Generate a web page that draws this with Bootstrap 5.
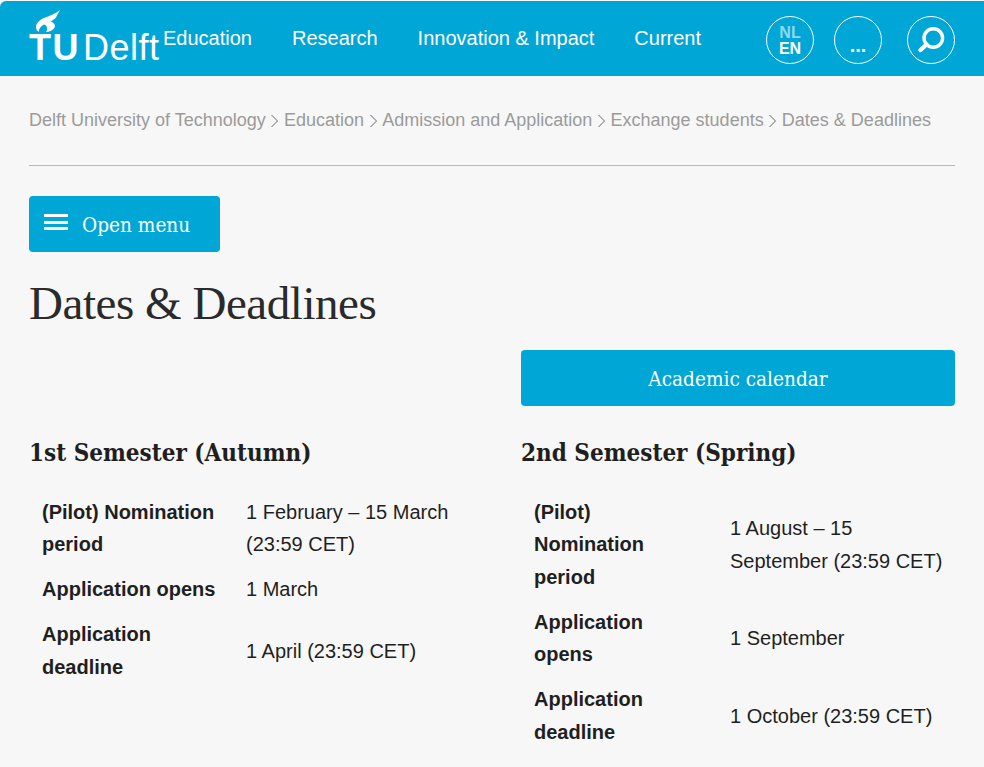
<!DOCTYPE html>
<html lang="en">
<head>
    <meta charset="UTF-8">
    <meta name="viewport" content="width=device-width, initial-scale=1.0">
    <title>Dates &amp; Deadlines</title>
    <link href="https://cdn.jsdelivr.net/npm/bootstrap@5.3.0/dist/css/bootstrap.min.css" rel="stylesheet">
    <style>
        body { background: #f7f7f7; color: #1f1f1f; font-family: "Liberation Sans", Arial, sans-serif; font-size: 20px; line-height: 32.5px; padding-top: 1px; }
        .site-head { background: #00a6d6; height: 75px; padding: 0 29px; border-top-left-radius: 6px; }
        .logo-box { position: relative; width: 134px; height: 75px; color: #fff; }
        .logo-flame { position: absolute; left: 6px; top: 8px; }
        .logo-text { position: absolute; left: 0; top: 34px; font-size: 36px; line-height: 26px; white-space: nowrap; }
        .logo-text b { letter-spacing: 1.5px; margin-right: 3px; }
        .logo-text span { letter-spacing: .5px; }
        .head-links { gap: 40px; margin-top: -2px; }
        .head-links a { color: #fff; text-decoration: none; line-height: 24px; }
        .round-btn { width: 48px; height: 48px; border: 1.5px solid #fff; border-radius: 50%; color: #fff; background: transparent; padding: 0; font-weight: 700; }
        .head-tools { gap: 20px; margin-top: 2px; }
        .lang-nl { color: #8fd8ee; font-size: 16px; line-height: 16px; }
        .lang-en { font-size: 16px; line-height: 15px; }
        .lang-btn { padding-top: 2px; }
        .dots { font-size: 20px; line-height: 20px; padding-top: 10px; }
        .search-btn { margin-left: 5px; }
        .page-wrap { padding: 0 29px; }
        .crumbs { color: #9b9b9b; font-size: 18px; gap: 5.6px; padding-top: 27px; height: 90px; border-bottom: 1px solid #b9b9b9; line-height: 35px; }
        .crumbs a { color: inherit; text-decoration: none; white-space: nowrap; }
        .slab-btn { background: #00a6d6; color: #fff; border: 0; border-radius: 4px; height: 56px; font-family: "DejaVu Serif", serif; font-stretch: condensed; font-size: 20.6px; }
        .menu-btn { width: 191px; margin-top: 30px; padding: 2px 0 0 15px; gap: 14px; }
        .menu-bars { width: 24px; margin-top: -6px; }
        .menu-bars i { display: block; height: 3px; background: #fff; margin-bottom: 3.5px; }
        .page-title { font-family: "Liberation Serif", serif; font-weight: 400; font-size: 47px; line-height: 56px; margin: 23px 0 0; letter-spacing: -.45px; color: #2a2a2a; }
        .col-pair { --bs-gutter-x: 58px; }
        .cal-btn { width: 100%; margin-top: 19px; padding-top: 3px; }
        .sem-title { font-family: "DejaVu Serif", serif; font-stretch: condensed; font-weight: 700; font-size: 24px; line-height: 32px; margin: 31px 0 20.5px; }
        .date-table { width: 100%; table-layout: fixed; }
        .date-table th, .date-table td { padding: 6.25px 13px; vertical-align: middle; }
        .date-table td { padding-right: 10px; }
        .date-table th { font-weight: 700; }
        .w-left { width: 204px; }
        .w-right { width: 196px; }
    </style>
</head>
<body>
    <header class="site-head d-flex align-items-center">
        <a href="#" class="logo-box d-block text-decoration-none flex-shrink-0">
            <svg class="logo-flame" width="30" height="28" viewBox="35 9 30 28"><path fill="#fff" d="M60 10C55 14 49 16 44 18C39 20 36 24 36 27C36 29 37 31 39 32C38.500 29 40.500 26.500 44 24.500C46 25 47 26.500 47 28.500C47 30 47 31 46 32C50 32 55 29.500 55 25.500C54.500 23.500 52.500 22 50.500 21.500C53 20 55 19 56 17.500C57 15 59 12 60 10Z"/></svg>
            <div class="logo-text"><b>TU</b><span>Delft</span></div>
        </a>
        <nav class="head-links d-flex">
            <a href="#">Education</a>
            <a href="#">Research</a>
            <a href="#">Innovation &amp; Impact</a>
            <a href="#">Current</a>
        </nav>
        <div class="head-tools d-flex ms-auto">
            <button class="round-btn lang-btn d-flex flex-column align-items-center justify-content-center"><span class="lang-nl">NL</span><span class="lang-en">EN</span></button>
            <button class="round-btn d-flex align-items-center justify-content-center"><span class="dots">...</span></button>
            <button class="round-btn search-btn d-flex align-items-center justify-content-center" aria-label="Search">
                <svg width="30" height="30" viewBox="0 0 30 30" fill="none" stroke="#fff"><circle cx="17.3" cy="13" r="9.3" stroke-width="3.4"/><path d="M10.5 19.5 L4.5 25" stroke-width="4.4" stroke-linecap="round"/></svg>
            </button>
        </div>
    </header>

    <main class="page-wrap">
        <nav class="crumbs d-flex align-items-start">
            <a href="#">Delft University of Technology</a>
            <svg width="7" height="35" viewBox="0 0 7 35" fill="none" stroke="#666"><path d="M.5 12L6.5 18L.5 24"/></svg>
            <a href="#">Education</a>
            <svg width="7" height="35" viewBox="0 0 7 35" fill="none" stroke="#666"><path d="M.5 12L6.5 18L.5 24"/></svg>
            <a href="#">Admission and Application</a>
            <svg width="7" height="35" viewBox="0 0 7 35" fill="none" stroke="#666"><path d="M.5 12L6.5 18L.5 24"/></svg>
            <a href="#">Exchange students</a>
            <svg width="7" height="35" viewBox="0 0 7 35" fill="none" stroke="#666"><path d="M.5 12L6.5 18L.5 24"/></svg>
            <a href="#">Dates &amp; Deadlines</a>
        </nav>

        <button class="slab-btn menu-btn d-flex align-items-center">
            <span class="menu-bars"><i></i><i></i><i class="mb-0"></i></span>
            <span>Open menu</span>
        </button>

        <h1 class="page-title">Dates &amp; Deadlines</h1>

        <div class="row col-pair">
            <div class="col-6 offset-6">
                <button class="slab-btn cal-btn">Academic calendar</button>
            </div>
        </div>

        <div class="row col-pair">
            <div class="col-6">
                <h2 class="sem-title">1st Semester (Autumn)</h2>
                <table class="date-table">
                    <colgroup><col class="w-left"><col></colgroup>
                    <tr><th>(Pilot) Nomination period</th><td>1 February – 15 March (23:59 CET)</td></tr>
                    <tr><th>Application opens</th><td>1 March</td></tr>
                    <tr><th>Application deadline</th><td>1 April (23:59 CET)</td></tr>
                </table>
            </div>
            <div class="col-6">
                <h2 class="sem-title">2nd Semester (Spring)</h2>
                <table class="date-table">
                    <colgroup><col class="w-right"><col></colgroup>
                    <tr><th>(Pilot) Nomination period</th><td>1 August – 15 September (23:59 CET)</td></tr>
                    <tr><th>Application opens</th><td>1 September</td></tr>
                    <tr><th>Application deadline</th><td>1 October (23:59 CET)</td></tr>
                </table>
            </div>
        </div>
    </main>

    <script src="https://cdn.jsdelivr.net/npm/bootstrap@5.3.0/dist/js/bootstrap.bundle.min.js"></script>
</body>
</html>
